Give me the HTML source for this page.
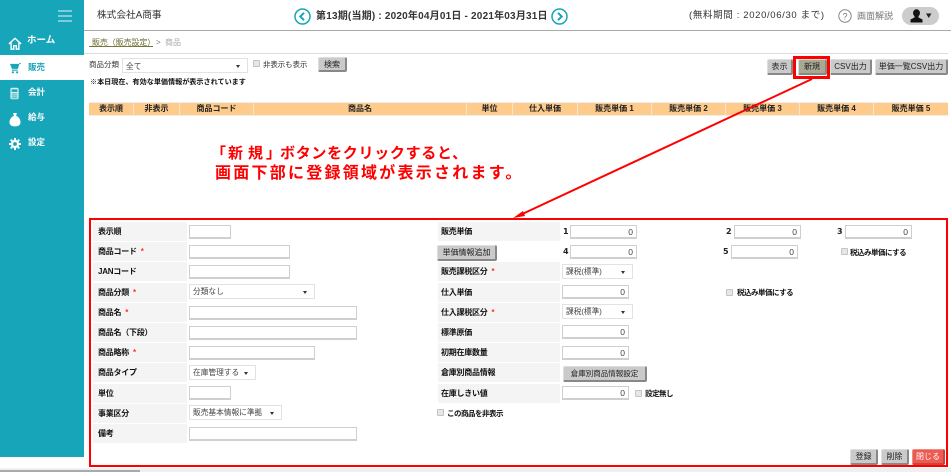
<!DOCTYPE html>
<html lang="ja"><head><meta charset="utf-8"><title>商品</title>
<style>
html,body{margin:0;padding:0;background:#fff;width:951px;height:472px;overflow:hidden}
body{position:relative;font-family:"Liberation Sans","Noto Sans CJK JP",sans-serif;font-size:8px;color:#222}
div{position:absolute;white-space:nowrap;box-sizing:border-box}
.lb{background:#f4f4f4;height:19px;line-height:20px;font-weight:bold;font-size:8px;letter-spacing:-.25px;color:#111}
.l{left:93px;width:94px;padding-left:5px}.r{left:438px;width:122px;padding-left:3px}
.lb i{color:#f33;font-style:normal;margin-left:4px}
.in{background:#fff;border:1px solid #cfcfcf;border-bottom:2px solid #cfcfcf;height:14px;text-align:right;font-size:8.5px;line-height:12px;padding-right:3px;color:#444}
.sel{background:#fff;border:1px solid #e2e2e2;height:15px;line-height:14px;font-size:7.7px;color:#444;padding-left:3px}
.sel:after{content:"";position:absolute;right:7px;top:6px;border:2.5px solid transparent;border-top:3px solid #333;border-bottom:0}
.btn{background:#cacaca;border:1px solid #ddd;border-right:2px solid #888;border-bottom:2px solid #888;border-radius:2px;text-align:center;font-size:8px;height:16px;line-height:13px;color:#222}
.cb{width:7px;height:7px;background:#e6e6e6;border:1px solid #c4c4c4;border-radius:1px}
.t{font-size:8px;line-height:12px;color:#333}
.b{font-weight:bold;font-size:7.500px;letter-spacing:-.5px;color:#111}
.n{font-family:"DejaVu Sans",sans-serif;font-weight:bold;font-size:8px;line-height:12px;color:#222}
.th{top:102px;height:14px;background:#fecb8b;border-top:1px solid #eee;border-bottom:1px solid #eee;border-right:1px solid #f1e6d6;text-align:center;font-weight:bold;font-size:8px;line-height:12px;color:#222}
.m{color:#fff;font-weight:bold;font-size:8.5px;line-height:12px}
.t,.lb,.th,.btn,.sel,.m,.n,.in{filter:blur(.2px)}
.rd{font-weight:bold;color:#f00;font-size:15px;line-height:18px;top:145px}
</style></head><body>

<!-- sidebar -->
<div style="left:0;top:0;width:84px;height:457px;background:#17a5ba"></div>
<div style="left:58px;top:10px;width:14px;height:1.5px;background:#7fcbd7"></div>
<div style="left:58px;top:15px;width:14px;height:1.5px;background:#7fcbd7"></div>
<div style="left:58px;top:20px;width:14px;height:1.5px;background:#7fcbd7"></div>
<div style="left:0;top:55px;width:84px;height:25px;background:#fff"></div>
<svg style="position:absolute;left:8px;top:37px" width="14" height="13" viewBox="0 0 16 15"><path d="M1 8 8 1.500 15 8M3.500 6.500V14H6.500V10H9.500V14H12.500V6.500" fill="none" stroke="#fff" stroke-width="1.600"/></svg>
<svg style="position:absolute;left:9px;top:63px" width="12" height="11" viewBox="0 0 14 13"><path d="M1 1H12L10.500 7H3.500Z" fill="#17a5ba"/><path d="M14 0.500 12 1M3.500 8.500H10" stroke="#17a5ba" stroke-width="1.200" fill="none"/><circle cx="4.500" cy="11" r="1.300" fill="#17a5ba"/><circle cx="9.500" cy="11" r="1.300" fill="#17a5ba"/></svg>
<svg style="position:absolute;left:10px;top:87px" width="9" height="13" viewBox="0 0 11 15"><rect x="0.500" y="0.500" width="10" height="14" rx="2" fill="#d8f0f3"/><rect x="2" y="2.500" width="7" height="3" fill="#17a5ba"/><path d="M2 8H9M2 10.500H9M2 12.800H9" stroke="#17a5ba" stroke-width="1"/></svg>
<svg style="position:absolute;left:9px;top:112px" width="12" height="15" viewBox="0 0 13 16"><path d="M4.500 1H8.500L7.700 4C11 5.500 12.500 8.500 12.500 11 12.500 14 10 15.500 6.500 15.500S.5 14 .5 11C.5 8.500 2 5.500 5.300 4Z" fill="#fff"/></svg>
<svg style="position:absolute;left:9px;top:138px" width="12" height="12" viewBox="0 0 14 14"><circle cx="7" cy="7" r="3.500" fill="none" stroke="#fff" stroke-width="2.600"/><path d="M7 0V3M7 11V14M0 7H3M11 7H14M2 2 4 4M10 10 12 12M12 2 10 4M4 10 2 12" stroke="#fff" stroke-width="2.200"/></svg>
<div class="m" style="left:27px;top:35px;font-size:9.500px">ホーム</div>
<div class="m" style="left:28px;top:61px;color:#17a5ba">販売</div>
<div class="m" style="left:28px;top:86px">会計</div>
<div class="m" style="left:28px;top:111px">給与</div>
<div class="m" style="left:28px;top:136px">設定</div>

<!-- header -->
<div style="left:84px;top:30px;width:867px;height:1px;background:#a9a9a9"></div>
<div class="t" style="left:97px;top:9px;font-size:9.700px;line-height:14px">株式会社A商事</div>
<svg style="position:absolute;left:294px;top:8px" width="17" height="17" viewBox="0 0 17 17"><circle cx="8.500" cy="8.500" r="7.500" fill="#fff" stroke="#17a5ba" stroke-width="1.500"/><path d="M10 4.800 6.300 8.500 10 12.200" fill="none" stroke="#17a5ba" stroke-width="2"/></svg>
<div class="t" style="left:316px;top:10px;font-size:10px;line-height:14px;font-weight:bold;letter-spacing:.2px">第13期(当期) : 2020年04月01日 - 2021年03月31日</div>
<svg style="position:absolute;left:551px;top:8px" width="17" height="17" viewBox="0 0 17 17"><circle cx="8.500" cy="8.500" r="7.500" fill="#fff" stroke="#17a5ba" stroke-width="1.500"/><path d="M7 4.800 10.700 8.500 7 12.200" fill="none" stroke="#17a5ba" stroke-width="2"/></svg>
<div class="t" style="left:689px;top:9px;font-size:9.500px;line-height:13px;letter-spacing:.65px">(無料期間 : 2020/06/30 まで)</div>
<svg style="position:absolute;left:838px;top:9px" width="14" height="14" viewBox="0 0 14 14"><circle cx="7" cy="7" r="6.200" fill="none" stroke="#888" stroke-width="1"/><text x="7" y="10.300" font-size="9" text-anchor="middle" fill="#777" font-family="Liberation Sans">?</text></svg>
<div class="t" style="left:857px;top:10px;color:#777;font-size:9px">画面解説</div>
<div style="left:902px;top:7px;width:37px;height:18px;border-radius:9px;background:#ccc"></div>
<svg style="position:absolute;left:910px;top:9px" width="24" height="14" viewBox="0 0 24 14"><ellipse cx="6.500" cy="4" rx="3.500" ry="3.800" fill="#111"/><path d="M4.500 6H8.500V8.500L12.500 10.500V13.500H.5V10.500L4.500 8.500Z" fill="#111"/><path d="M16 4.500H21.500L18.750 9Z" fill="#222"/></svg>

<!-- breadcrumb -->
<div class="t" style="left:92px;top:37px;color:#6d6d35;letter-spacing:-.1px">販売（販売設定）</div>
<div style="left:89px;top:46px;width:64px;height:1px;background:#77773c"></div>
<div class="t" style="left:156px;top:37px;color:#777">&gt;</div>
<div class="t" style="left:165px;top:37px;color:#aaa">商品</div>
<div style="left:84px;top:53px;width:864px;height:1px;background:#ddd"></div>

<!-- search row -->
<div class="t" style="left:89px;top:59px;font-size:7.500px">商品分類</div>
<div class="sel" style="left:122px;top:58px;width:126px;padding-left:3px;line-height:15px">全て</div>
<div class="cb" style="left:253px;top:60px"></div>
<div class="t" style="left:263px;top:59px;font-size:7.400px">非表示も表示</div>
<div class="btn" style="left:318px;top:57px;width:29px;height:15px">検索</div>
<div class="t" style="left:90px;top:76px;font-size:7.100px;font-weight:bold;color:#111">※本日現在、有効な単価情報が表示されています</div>

<!-- toolbar -->
<div class="btn" style="left:767px;top:59px;width:26px">表示</div>
<div class="btn" style="left:798px;top:59px;width:29px;background:#a9a893">新規</div>
<div class="btn" style="left:830px;top:59px;width:42px">CSV出力</div>
<div class="btn" style="left:875px;top:59px;width:73px">単価一覧CSV出力</div>
<div style="left:793px;top:56px;width:37px;height:23px;border:3px solid #f00"></div>

<!-- table head -->
<div class="th" style="left:89px;width:45px">表示順</div>
<div class="th" style="left:134px;width:46px">非表示</div>
<div class="th" style="left:180px;width:74px">商品コード</div>
<div class="th" style="left:254px;width:213px">商品名</div>
<div class="th" style="left:467px;width:46px">単位</div>
<div class="th" style="left:513px;width:65px">仕入単価</div>
<div class="th" style="left:578px;width:74px">販売単価 1</div>
<div class="th" style="left:652px;width:74px">販売単価 2</div>
<div class="th" style="left:726px;width:74px">販売単価 3</div>
<div class="th" style="left:800px;width:74px">販売単価 4</div>
<div class="th" style="left:874px;width:74px;border-right:0">販売単価 5</div>

<!-- red annotation -->
<div class="rd" style="left:211px">「</div>
<div class="rd" style="left:228px">新</div>
<div class="rd" style="left:248px">規</div>
<div class="rd" style="left:266px">」</div>
<div class="rd" style="left:280px;letter-spacing:.7px">ボタンをクリックすると、</div>
<div class="rd" style="left:215px;top:164px;font-size:16px;line-height:20px;letter-spacing:2.250px">画面下部に登録領域が表示されます。</div>

<!-- form left -->
<div class="lb l" style="top:222px">表示順</div>
<div class="lb l" style="top:242px">商品コード<i>*</i></div>
<div class="lb l" style="top:262px">JANコード</div>
<div class="lb l" style="top:283px">商品分類<i>*</i></div>
<div class="lb l" style="top:303px">商品名<i>*</i></div>
<div class="lb l" style="top:323px">商品名（下段）</div>
<div class="lb l" style="top:343px">商品略称<i>*</i></div>
<div class="lb l" style="top:363px">商品タイプ</div>
<div class="lb l" style="top:384px">単位</div>
<div class="lb l" style="top:404px">事業区分</div>
<div class="lb l" style="top:424px">備考</div>

<div class="in" style="left:189px;top:225px;width:42px"></div>
<div class="in" style="left:189px;top:245px;width:101px"></div>
<div class="in" style="left:189px;top:265px;width:101px"></div>
<div class="sel" style="left:189px;top:284px;width:126px">分類なし</div>
<div class="in" style="left:189px;top:306px;width:168px"></div>
<div class="in" style="left:189px;top:326px;width:168px"></div>
<div class="in" style="left:189px;top:346px;width:126px"></div>
<div class="sel" style="left:189px;top:365px;width:67px">在庫管理する</div>
<div class="in" style="left:189px;top:386px;width:42px"></div>
<div class="sel" style="left:189px;top:405px;width:93px">販売基本情報に準拠</div>
<div class="in" style="left:189px;top:427px;width:168px"></div>

<!-- form right -->
<div class="lb r" style="top:222px">販売単価</div>
<div class="btn" style="left:437px;top:245px;width:60px;height:16px">単価情報追加</div>
<div class="lb r" style="top:262px">販売課税区分<i>*</i></div>
<div class="lb r" style="top:283px">仕入単価</div>
<div class="lb r" style="top:303px">仕入課税区分<i>*</i></div>
<div class="lb r" style="top:323px">標準原価</div>
<div class="lb r" style="top:343px">初期在庫数量</div>
<div class="lb r" style="top:363px">倉庫別商品情報</div>
<div class="lb r" style="top:384px">在庫しきい値</div>

<div class="n" style="left:563px;top:226px">1</div>
<div class="in" style="left:570px;top:225px;width:67px">0</div>
<div class="n" style="left:563px;top:246px">4</div>
<div class="in" style="left:570px;top:245px;width:67px">0</div>
<div class="n" style="left:726px;top:226px">2</div>
<div class="in" style="left:734px;top:225px;width:67px">0</div>
<div class="n" style="left:837px;top:226px">3</div>
<div class="in" style="left:845px;top:225px;width:67px">0</div>
<div class="n" style="left:723px;top:246px">5</div>
<div class="in" style="left:731px;top:245px;width:67px">0</div>
<div class="cb" style="left:841px;top:248px"></div>
<div class="t b" style="left:850px;top:247px">税込み単価にする</div>

<div class="sel" style="left:562px;top:264px;width:71px">課税(標準)</div>
<div class="in" style="left:562px;top:285px;width:67px">0</div>
<div class="cb" style="left:726px;top:289px"></div>
<div class="t b" style="left:737px;top:287px">税込み単価にする</div>
<div class="sel" style="left:562px;top:304px;width:71px">課税(標準)</div>
<div class="in" style="left:562px;top:325px;width:67px">0</div>
<div class="in" style="left:562px;top:346px;width:67px">0</div>
<div class="btn" style="left:563px;top:366px;width:84px;font-size:7.500px">倉庫別商品情報設定</div>
<div class="in" style="left:562px;top:386px;width:67px">0</div>
<div class="cb" style="left:635px;top:390px"></div>
<div class="t b" style="left:645px;top:388px">設定無し</div>
<div class="cb" style="left:437px;top:409px"></div>
<div class="t b" style="left:447px;top:408px">この商品を非表示</div>

<div class="btn" style="left:850px;top:449px;width:28px">登録</div>
<div class="btn" style="left:881px;top:449px;width:28px">削除</div>
<div class="btn" style="left:912px;top:449px;width:33px;background:#ec5a52;color:#fff;border-color:#f08a84 #c9443d #c9443d #f08a84">閉じる</div>

<!-- red frame + arrow -->
<div style="left:89px;top:218px;width:859px;height:249px;border:2px solid #f00"></div>
<svg style="position:absolute;left:0;top:0;pointer-events:none" width="951" height="472"><path d="M812 79 518 216" stroke="#f00" stroke-width="2" fill="none"/><path d="M513 218 523 211 525 216Z" fill="#f00"/></svg>

<!-- bottom scrollbar -->
<div style="left:0;top:468px;width:951px;height:4px;background:#f0f0f0"></div>
<div style="left:0;top:470px;width:140px;height:2px;background:#aaa"></div>
</body></html>
